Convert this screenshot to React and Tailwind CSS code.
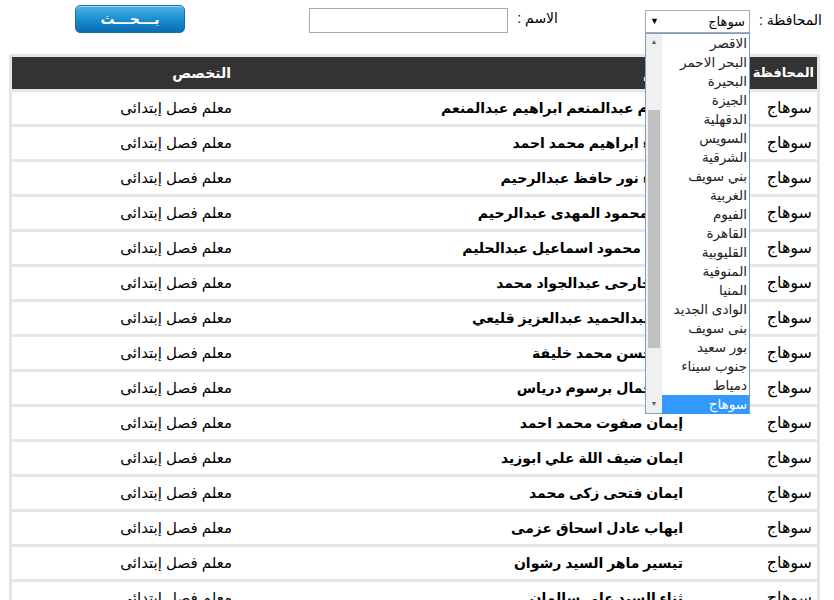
import React from "react";

const govs = [
  "الاقصر",
  "البحر الاحمر",
  "البحيرة",
  "الجيزة",
  "الدقهلية",
  "السويس",
  "الشرقية",
  "بني سويف",
  "الغربية",
  "الفيوم",
  "القاهرة",
  "القليوبية",
  "المنوفية",
  "المنيا",
  "الوادى الجديد",
  "بنى سويف",
  "بور سعيد",
  "جنوب سيناء",
  "دمياط",
  "سوهاج",
];

const rows = [
  "ابتسام عبدالمنعم ابراهيم عبدالمنعم",
  "اسماء ابراهيم محمد احمد",
  "اسماء نور حافظ عبدالرحيم",
  "امال محمود المهدى عبدالرحيم",
  "امانى محمود اسماعيل عبدالحليم",
  "انور جارحى عبدالجواد محمد",
  "امل عبدالحميد عبدالعزيز قليعي",
  "امل حسن محمد خليفة",
  "امل جمال برسوم درياس",
  "إيمان صفوت محمد احمد",
  "ايمان ضيف اللة علي ابوزيد",
  "ايمان فتحى زكى محمد",
  "ايهاب عادل اسحاق عزمى",
  "تيسير ماهر السيد رشوان",
  "ثناء السيد علي سالمان",
];

const font = "font-['Liberation_Sans','DejaVu_Sans',sans-serif]";

const GovList = () => (
  <div dir="ltr" className="absolute right-0 top-full z-10 flex h-[381px] w-[105px] border border-[#7a9cd3] bg-white">
    {/* scrollbar sits on the left for an rtl select */}
    <div className="relative w-[16px] bg-[#f0f0f0]">
      <div className="flex h-[17px] items-center justify-center text-[7px] text-[#606060]">▲</div>
      <div className="absolute left-[2px] top-[76px] h-[238px] w-[12px] bg-[#c1c1c1]" />
      <div className="absolute bottom-0 flex h-[17px] w-full items-center justify-center text-[7px] text-[#606060]">▼</div>
    </div>
    <ul className="flex-1" dir="rtl">
      {govs.map((g) => (
        <li
          key={g}
          className={
            g === "سوهاج"
              ? "h-[19px] whitespace-nowrap bg-[#3399ff] pr-[2px] text-[13.5px] leading-[19px] text-white"
              : "h-[19px] whitespace-nowrap pr-[2px] text-[13.5px] leading-[19px] text-[#222]"
          }
        >
          {g}
        </li>
      ))}
    </ul>
  </div>
);

export default function App() {
  return (
    <div className={`${font} h-[600px] w-[834px] overflow-hidden bg-white text-black`}>
      {/* search bar */}
      <div dir="rtl" className="flex h-[54px] items-start pr-[12px]">
        <span className="mt-[10px] w-[59px] whitespace-nowrap text-[14px] leading-[20px]">المحافظة :</span>
        <div className="relative mr-[13px] mt-[10px]">
          <div className="flex h-[23px] w-[105px] items-center justify-between border border-[#a9a9a9] bg-white px-[4px]">
            <span className="text-[13px]">سوهاج</span>
            <span className="text-[9px]">▼</span>
          </div>
          <GovList />
        </div>
        <span className="mr-[87px] mt-[8px] w-[45px] whitespace-nowrap text-[14px] leading-[20px]">الاسم :</span>
        <input
          type="text"
          className="mr-[5px] mt-[8px] h-[25px] w-[199px] border border-[#a9a9a9] bg-white outline-none"
        />
        <button className="mr-[124px] mt-[5px] h-[28px] w-[110px] rounded-[5px] border border-[#1b6fa8] bg-gradient-to-b from-[#4db3e8] via-[#1a8fd0] to-[#0a6cb2] text-[14px] font-bold text-white shadow-[inset_0_1px_0_rgba(255,255,255,0.5)]">
          بـــحـــث
        </button>
      </div>

      {/* results table */}
      <div className="ml-[9px] w-[811px] bg-[#e6e6e6] px-[3px]">
        <table dir="rtl" className="w-full table-fixed border-separate border-spacing-x-0 border-spacing-y-[3px]">
          <colgroup>
            <col className="w-[64px]" />
            <col />
            <col className="w-[228px]" />
          </colgroup>
          <thead>
            <tr className="h-[32px] bg-[#333333] font-bold text-white">
              <th className="whitespace-nowrap pr-[3px] text-right text-[13px]">المحافظة</th>
              <th className="pr-[70px] text-right text-[14px]">الاسم</th>
              <th className="pr-[9px] text-right text-[14px]">التخصص</th>
            </tr>
          </thead>
          <tbody>
            {rows.map((name, i) => (
              <tr key={i} className="h-[32px] bg-white">
                <td className="pr-[5px] text-right text-[16px]">سوهاج</td>
                <td className="whitespace-nowrap pr-[70px] text-right text-[14px] font-bold">{name}</td>
                <td className="pr-[8px] text-right text-[15px]">معلم فصل إبتدائى</td>
              </tr>
            ))}
          </tbody>
        </table>
      </div>
    </div>
  );
}
